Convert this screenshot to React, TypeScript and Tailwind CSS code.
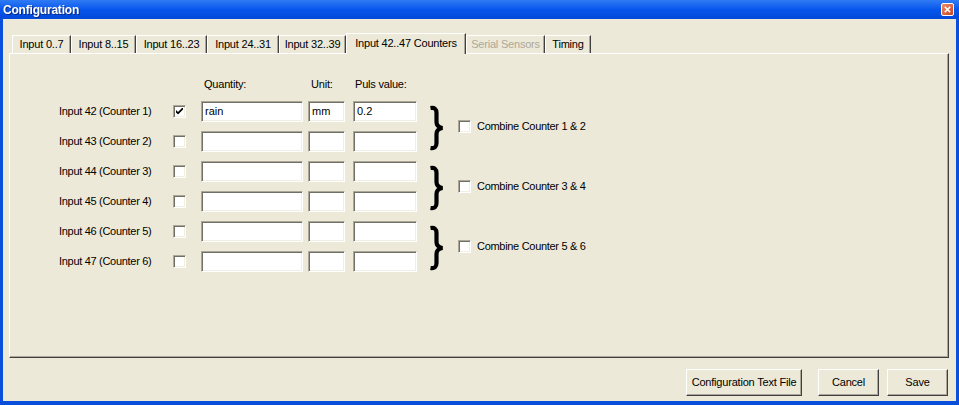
import React from "react";

const font = { fontFamily: '"Liberation Sans", Arial, sans-serif' };

const tabs = [
  { label: "Input 0..7", w: "w-[59px]" },
  { label: "Input 8..15", w: "w-[65px]" },
  { label: "Input 16..23", w: "w-[71px]" },
  { label: "Input 24..31", w: "w-[72px]" },
  { label: "Input 32..39", w: "w-[67px]" },
  { label: "Input 42..47 Counters", w: "w-[120px]", active: true },
  { label: "Serial Sensors", w: "w-[79px]", disabled: true },
  { label: "Timing", w: "w-[46px]" },
];

const rows = [
  { label: "Input 42 (Counter 1)", checked: true, qty: "rain", unit: "mm", puls: "0.2" },
  { label: "Input 43 (Counter 2)" },
  { label: "Input 44 (Counter 3)" },
  { label: "Input 45 (Counter 4)" },
  { label: "Input 46 (Counter 5)" },
  { label: "Input 47 (Counter 6)" },
];

function Sunken({ w, value }: { w: string; value?: string }) {
  return (
    <div
      className={`${w} h-[21px] bg-white border border-t-[#ACA899] border-l-[#ACA899] border-r-white border-b-white shadow-[inset_1px_1px_0_#716F64,inset_-1px_-1px_0_#F1EFE2] pl-[3px] flex items-center text-[11px] text-black`}
    >
      {value}
    </div>
  );
}

function CheckBox({ checked }: { checked?: boolean }) {
  return (
    <div className="w-[13px] h-[13px] bg-white border border-t-[#ACA899] border-l-[#ACA899] border-r-white border-b-white shadow-[inset_1px_1px_0_#716F64,inset_-1px_-1px_0_#F1EFE2] flex items-center justify-center">
      {checked && (
        <svg width="7" height="7" viewBox="0 0 7 7">
          <path d="M0 2 L0 4.5 L2 6.5 L7 1.5 L7 -1 L2 4 Z" fill="black" />
        </svg>
      )}
    </div>
  );
}

function Brace() {
  return (
    <svg width="16" height="46" viewBox="0 0 16 46" className="shrink-0">
      <path
        d="M1.5 3 Q7.5 2 7.5 8 L7.5 17 Q7.5 22 13.5 23 Q7.5 24 7.5 29 L7.5 38 Q7.5 44 1.5 43"
        stroke="black"
        strokeWidth="4.2"
        fill="none"
        strokeLinecap="butt"
      />
    </svg>
  );
}

function Button({ w, children }: { w: string; children: React.ReactNode }) {
  return (
    <div
      className={`${w} h-[27px] flex items-center justify-center border border-t-white border-l-white border-r-[#404040] border-b-[#404040] shadow-[inset_-1px_-1px_0_#ACA899] bg-[#ECE9D8] text-[11px] text-black tracking-[-0.2px]`}
    >
      {children}
    </div>
  );
}

export default function App() {
  return (
    <div style={font} className="w-[959px] h-[405px] flex flex-col bg-[#0A4FDC] select-none">
      {/* Title bar */}
      <div className="h-[19px] shrink-0 flex items-center justify-between pl-[3px] pr-[5px] bg-gradient-to-b from-[#2F7BF5] via-[#0656EB] to-[#0149D9]">
        <span className="text-white font-bold text-[12px] tracking-[-0.2px] drop-shadow-[1px_1px_0_#0A2A8C]">
          Configuration
        </span>
        <div className="w-[13px] h-[13px] rounded-[2px] border border-white bg-gradient-to-br from-[#EC8C6C] to-[#C8401A] flex items-center justify-center">
          <svg width="7" height="7" viewBox="0 0 7 7">
            <path d="M0.8 0.8 L6.2 6.2 M6.2 0.8 L0.8 6.2" stroke="white" strokeWidth="1.6" />
          </svg>
        </div>
      </div>

      {/* Client area */}
      <div className="flex-1 ml-[3px] mr-[3px] mb-[4px] bg-[#ECE9D8] flex flex-col pt-[14px] pl-[6px] pr-[7px]">
        {/* Tabs */}
        <div className="h-[20px] flex items-end pl-[3px] relative z-10">
          {tabs.map((t) =>
            t.active ? (
              <div
                key={t.label}
                className={`${t.w} h-[21px] -mb-[1px] bg-[#ECE9D8] border-t border-l border-t-white border-l-white border-r border-r-[#404040] shadow-[inset_-1px_0_0_#ACA899] flex items-center justify-center text-[11px] tracking-[-0.2px] text-black pb-[2px]`}
              >
                {t.label}
              </div>
            ) : (
              <div
                key={t.label}
                className={`${t.w} h-[18px] bg-[#ECE9D8] border-t border-l border-t-white border-l-white border-r border-r-[#404040] shadow-[inset_-1px_0_0_#ACA899] flex items-center justify-center text-[11px] tracking-[-0.2px] ${
                  t.disabled ? "text-[#ACA899]" : "text-black"
                }`}
              >
                {t.label}
              </div>
            )
          )}
        </div>

        {/* Panel */}
        <div className="h-[305px] shrink-0 border border-t-white border-l-white border-r-[#404040] border-b-[#404040] shadow-[inset_-1px_-1px_0_#ACA899] pl-[49px] pt-[24px]">
          {/* Header */}
          <div className="flex h-[13px] items-center text-[11px] tracking-[-0.2px] text-black">
            <div className="w-[145px]" />
            <div className="w-[107px]">Quantity:</div>
            <div className="w-[44px]">Unit:</div>
            <div>Puls value:</div>
          </div>

          {/* Rows in groups of two */}
          <div className="mt-[10px] flex flex-col gap-[9px]">
            {[0, 1, 2].map((g) => (
              <div key={g} className="flex items-center">
                <div className="flex flex-col gap-[9px]">
                  {rows.slice(g * 2, g * 2 + 2).map((r) => (
                    <div key={r.label} className="flex items-center h-[21px]">
                      <div className="w-[114px] text-[11px] tracking-[-0.3px] text-black">{r.label}</div>
                      <CheckBox checked={r.checked} />
                      <div className="w-[15px]" />
                      <Sunken w="w-[102px]" value={r.qty} />
                      <div className="w-[5px]" />
                      <Sunken w="w-[37px]" value={r.unit} />
                      <div className="w-[8px]" />
                      <Sunken w="w-[64px]" value={r.puls} />
                    </div>
                  ))}
                </div>
                <div className="ml-[12px] mt-[2px]">
                  <Brace />
                </div>
                <div className="ml-[13px] flex items-center gap-[6px]">
                  <CheckBox />
                  <span className="text-[11px] tracking-[-0.3px] text-black">
                    Combine Counter {g * 2 + 1} &amp; {g * 2 + 2}
                  </span>
                </div>
              </div>
            ))}
          </div>
        </div>

        {/* Buttons */}
        <div className="mt-[11px] flex justify-end pr-[1px]">
          <Button w="w-[116px]">Configuration Text File</Button>
          <div className="w-[16px]" />
          <Button w="w-[61px]">Cancel</Button>
          <div className="w-[8px]" />
          <Button w="w-[61px]">Save</Button>
        </div>
      </div>
    </div>
  );
}
